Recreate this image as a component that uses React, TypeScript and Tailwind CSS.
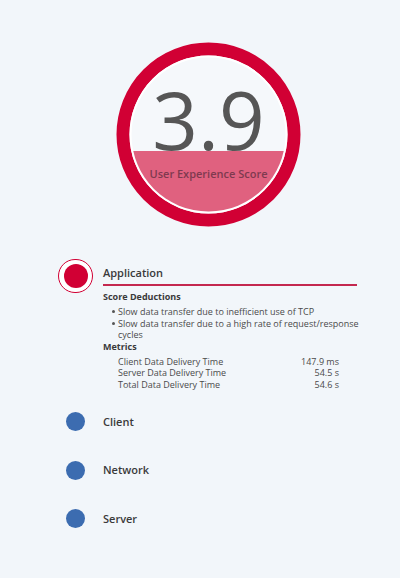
const deductions = [
  "Slow data transfer due to inefficient use of TCP",
  "Slow data transfer due to a high rate of request/response",
];

const metrics = [
  { label: "Client Data Delivery Time", value: "147.9 ms" },
  { label: "Server Data Delivery Time", value: "54.5 s" },
  { label: "Total Data Delivery Time", value: "54.6 s" },
];

const others = ["Client", "Network", "Server"];

const ScoreGauge = () => (
  <div className="relative ml-[116px] h-[185px] w-[185px]">
    <svg width="185" height="185" viewBox="0 0 185 185" className="absolute inset-0">
      <defs>
        <clipPath id="lower">
          <rect x="0" y="109" width="185" height="80" />
        </clipPath>
      </defs>
      <circle cx="92.5" cy="92.5" r="85.5" fill="#f5f8fb" stroke="#d10034" strokeWidth="13" />
      <circle cx="92.5" cy="92.5" r="78" fill="none" stroke="#ffffff" strokeWidth="2" />
      <circle cx="92.5" cy="92.5" r="77" fill="#e0617f" clipPath="url(#lower)" />
    </svg>
    <div className="absolute left-0 right-0 top-[48px] text-center text-[80px] leading-[58px] text-[#565656]">
      3.9
    </div>
    <div className="absolute left-0 right-0 top-[125px] text-center text-[11px] font-semibold leading-[14px] text-[#7e3a4f]">
      User Experience Score
    </div>
  </div>
);

export default function App() {
  return (
    <div className="min-h-[578px] w-[400px] bg-[#f2f6fa] pt-[42px] font-['Open_Sans',sans-serif]">
      <ScoreGauge />

      <div className="mt-[32px] pl-[58px]">
        {/* selected category */}
        <div className="flex items-start">
          <div className="flex h-[34px] w-[35px] shrink-0 items-center justify-center rounded-full border-[1.5px] border-[#d10034] bg-white">
            <div className="h-[24px] w-[24px] rounded-full bg-[#d10034]" />
          </div>
          <div className="ml-[10px] w-[254px]">
            <div className="border-b-2 border-[#c4284f] pb-[3px] pt-[6px] text-[11px] font-semibold leading-[16px] text-[#3a3a3a]">
              Application
            </div>
            <div className="mt-[5px] text-[9px] font-bold leading-[11.5px] text-[#3a3a3a]">Score Deductions</div>
            <ul className="mt-[3.5px] text-[9px] leading-[11.6px] text-[#4a4a4a]">
              {deductions.map((d, i) => (
                <li key={d} className="flex">
                  <span className="flex h-[11.6px] w-[15px] shrink-0 items-center pl-[8.5px]">
                    <span className="h-[3px] w-[3px] rounded-full bg-[#555]" />
                  </span>
                  <span className="whitespace-nowrap">
                    {d}
                    {i === 1 && (
                      <>
                        <br />
                        cycles
                      </>
                    )}
                  </span>
                </li>
              ))}
            </ul>
            <div className="text-[9px] font-bold leading-[11.5px] text-[#3a3a3a]">Metrics</div>
            <div className="mt-[3.5px] pl-[15px] pr-[18px] text-[9px] leading-[11.6px] text-[#4a4a4a]">
              {metrics.map((m) => (
                <div key={m.label} className="flex justify-between">
                  <span>{m.label}</span>
                  <span>{m.value}</span>
                </div>
              ))}
            </div>
          </div>
        </div>

        {/* other categories */}
        <div className="mt-[7px]">
          {others.map((name) => (
            <div key={name} className="flex h-[48.5px] items-center">
              <div className="flex w-[35px] shrink-0 justify-center">
                <div className="h-[19px] w-[19px] rounded-full bg-[#3c6cb0]" />
              </div>
              <span className="ml-[10px] text-[11px] font-semibold text-[#3a3a3a]">{name}</span>
            </div>
          ))}
        </div>
      </div>
    </div>
  );
}
